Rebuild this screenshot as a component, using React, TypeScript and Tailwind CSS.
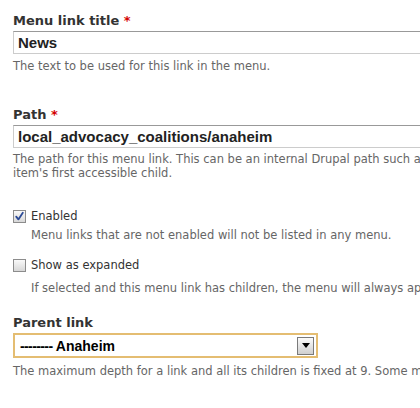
import React from "react";

const labelFont = { fontFamily: '"DejaVu Sans", Verdana, sans-serif' };

const Checkbox: React.FC<{ checked?: boolean }> = ({ checked }) => (
  <svg width="13" height="13" viewBox="0 0 13 13" className="shrink-0">
    <defs>
      <linearGradient id={checked ? "cbOn" : "cbOff"} x1="0" y1="0" x2="0" y2="1">
        <stop offset="0" stopColor="#fbfbfb" />
        <stop offset="1" stopColor="#d6d6d6" />
      </linearGradient>
    </defs>
    <rect x="0.5" y="0.5" width="12" height="12" fill={`url(#${checked ? "cbOn" : "cbOff"})`} stroke="#8c8c8c" />
    {checked && (
      <path d="M3.2 6.6 L5.4 9.4 L9.8 2.8" fill="none" stroke="#2b4a96" strokeWidth="1.8" strokeLinecap="round" strokeLinejoin="round" />
    )}
  </svg>
);

const Label: React.FC<{ text: string; required?: boolean }> = ({ text, required }) => (
  <div className="text-[13px] leading-[16px] font-bold text-[#333]" style={labelFont}>
    {text}
    {required && <span className="text-[#d40000]"> *</span>}
  </div>
);

const Desc: React.FC<{ children: React.ReactNode; className?: string }> = ({ children, className }) => (
  <div
    className={"text-[11.5px] leading-[14px] text-[#666] whitespace-nowrap " + (className ?? "")}
    style={labelFont}
  >
    {children}
  </div>
);

const TextInput: React.FC<{ value: string }> = ({ value }) => (
  <div className="mt-[2px] w-[620px] h-[23px] border border-[#ccc] border-t-[#999] bg-white pl-[4px] text-[15px] leading-[21px] font-bold text-[#222] font-['Liberation_Sans',Arial,sans-serif] whitespace-nowrap">
    {value}
  </div>
);

export default function App() {
  return (
    <div className="w-[420px] h-[408px] overflow-hidden bg-white pl-[13px] pt-[13px]">
      {/* Menu link title */}
      <Label text="Menu link title" required />
      <TextInput value="News" />
      <Desc className="mt-[5px]">The text to be used for this link in the menu.</Desc>

      {/* Path */}
      <div className="mt-[34px]">
        <Label text="Path" required />
      </div>
      <TextInput value="local_advocacy_coalitions/anaheim" />
      <Desc className="mt-[4px]">
        The path for this menu link. This can be an internal Drupal path such as node/add or an external URL such as
        http://drupal.org. Enter &lt;front&gt; to link to the
      </Desc>
      <Desc>item's first accessible child.</Desc>

      {/* Enabled */}
      <div className="mt-[29px] flex items-center gap-[5px]">
        <Checkbox checked />
        <span className="text-[11.5px] leading-[14px] text-[#333]" style={labelFont}>
          Enabled
        </span>
      </div>
      <Desc className="mt-[5px] pl-[18px]">Menu links that are not enabled will not be listed in any menu.</Desc>

      {/* Show as expanded */}
      <div className="mt-[16px] flex items-center gap-[5px]">
        <Checkbox />
        <span className="text-[11.5px] leading-[14px] text-[#333]" style={labelFont}>
          Show as expanded
        </span>
      </div>
      <Desc className="mt-[9px] pl-[18px]">
        If selected and this menu link has children, the menu will always appear expanded.
      </Desc>

      {/* Parent link */}
      <div className="mt-[20px]">
        <Label text="Parent link" />
      </div>
      <div className="mt-[2px] w-[305px] h-[25px] border-2 border-[#e4bd72] bg-white flex items-center justify-between pl-[5px] pr-[2px]">
        <span className="text-[14px] leading-[18px] font-bold text-black font-['Liberation_Sans',Arial,sans-serif] whitespace-nowrap">
          <span className="tracking-[-0.6px]">--------</span> Anaheim
        </span>
        <div className="w-[17px] h-[18px] border border-[#7a7a7a] bg-gradient-to-b from-[#fbfbfb] to-[#cfcfcf] flex items-center justify-center">
          <svg width="8" height="5" viewBox="0 0 8 5">
            <path d="M0 0 H8 L4 5 Z" fill="#000" />
          </svg>
        </div>
      </div>
      <Desc className="mt-[6px]">
        The maximum depth for a link and all its children is fixed at 9. Some menu links may not be available as
        parents if selecting them would exceed this limit.
      </Desc>
    </div>
  );
}
